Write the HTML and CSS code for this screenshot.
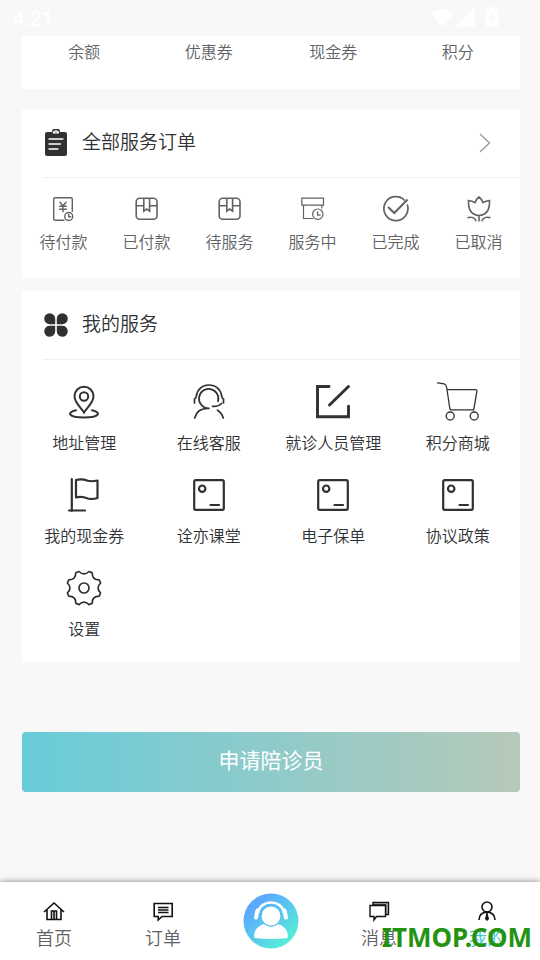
FILE: index.html
```html
<!DOCTYPE html>
<html lang="zh-CN">
<head>
<meta charset="utf-8">
<meta name="viewport" content="width=device-width, initial-scale=1">
<title>我的</title>
<link rel="stylesheet" href="styles.css">
</head>
<body>
<svg class="sprite" aria-hidden="true">
  <symbol id="i-package" viewBox="0 0 24 24"><g fill="none" stroke="currentColor" stroke-width="1.6"><rect x="1.2" y="1.2" width="20.8" height="21" rx="3.5"/><path d="M1.2 8.8h7.6M14.6 8.8H22M8.800 1.200v13l2.900-2.200 2.900 2.200v-13"/></g></symbol>
  <symbol id="i-card" viewBox="0 0 32 32"><g fill="none" stroke="currentColor" stroke-width="2.2" stroke-linecap="round"><rect x="1.200" y="1.200" width="29.600" height="29.600" rx="1.5"/><circle cx="9.200" cy="9.700" r="3.200"/><path d="M17.500 26h8.500"/></g></symbol>
</svg>
<div class="app">
  <header class="status">
    <span class="clock">4:21</span>
    <svg class="signals" width="68" height="22" viewBox="0 0 68 22" fill="currentColor" aria-hidden="true">
      <path d="M0 5Q11.500-3 23 5L11.500 19Z"/><path d="M25 19L44 0V19Z"/><path d="M59-1h5v2h3v18H55V1h4zM62 5l-4.500 6h3v5l4.500-6.500h-3z" fill-rule="evenodd"/>
    </svg>
  </header>
  <main>
    <section class="card wallet">
      <a href="#">余额</a><a href="#">优惠券</a><a href="#">现金券</a><a href="#">积分</a>
    </section>

    <section class="card orders">
      <a class="card-head" href="#">
        <svg width="26" height="28" viewBox="0 0 26 28" aria-hidden="true"><path fill="#303133" d="M4 3h5a4 4 0 0 1 8 0h5a2 2 0 0 1 2 2v20a2 2 0 0 1-2 2H4a2 2 0 0 1-2-2V5a2 2 0 0 1 2-2z"/><path d="M10.500 3.800a2.500 2 0 0 1 5 0zM6 10h14M6 15h11.500M6 20h9" fill="none" stroke="#fff" stroke-width="1.300" stroke-linecap="round"/></svg>
        <h2>全部服务订单</h2>
        <svg class="chevron" width="12" height="20" viewBox="0 0 12 20" fill="none" stroke="#909399" stroke-width="1.200" aria-hidden="true"><path d="M1 1l9.500 9L1 19"/></svg>
      </a>
      <nav class="order-list">
        <a href="#"><svg width="28" height="28" viewBox="0 0 28 28" fill="none" stroke="currentColor" stroke-width="1.400" aria-hidden="true"><path d="M14.500 25.200H5.200a1.500 1.500 0 0 1-1.500-1.500V4.300a1.500 1.500 0 0 1 1.500-1.500h15.600a1.500 1.500 0 0 1 1.500 1.500V17M9.600 6.800l3.400 4 3.400-4M13 10.800v6.400M9.200 11.300h7.600M9.200 14.200h7.600"/><circle cx="18.700" cy="21.500" r="4"/><path d="M18.700 19v2.700h2.500"/></svg>待付款</a>
        <a href="#"><svg width="28" height="28" viewBox="-2 -2 28 28" aria-hidden="true"><use href="#i-package" width="24" height="24"/></svg>已付款</a>
        <a href="#"><svg width="28" height="28" viewBox="-2 -2 28 28" aria-hidden="true"><use href="#i-package" width="24" height="24"/></svg>待服务</a>
        <a href="#"><svg width="28" height="28" viewBox="0 0 28 28" fill="none" stroke="currentColor" stroke-width="1.200" aria-hidden="true"><path d="M2.800 3.200h21.700v7H2.800zM4.500 10.200v13.300h9.800M22.800 10.200v3.300"/><circle cx="18.800" cy="19.200" r="5.200"/><path d="M18.600 16.500v3.600h3"/></svg>服务中</a>
        <a href="#"><svg width="28" height="28" viewBox="0 0 28 28" fill="none" stroke="currentColor" stroke-width="1.700" aria-hidden="true"><path d="M22.800 5.500A12 12 0 1 0 25.200 9.500"/><path d="M6 12l6.300 6L25.500 4.500" stroke-width="2"/></svg>已完成</a>
        <a href="#"><svg width="28" height="28" viewBox="0 0 28 28" fill="none" stroke="currentColor" stroke-width="1.600" aria-hidden="true"><path d="M3.500 5.500c2.500.2 4.500.9 6.500 2.200 1-2.700 2.300-4.500 4-5.700 1.700 1.200 3 3 4 5.700 2-1.300 4-2 6.500-2.200.4 9-2.500 14.500-10.500 15-8-.5-10.900-6-10.500-15zM14 20.500v6M2.500 22.700c4-1.200 7.500.2 8.700 3.500M25.500 22.700c-4-1.200-7.500.2-8.700 3.500"/></svg>已取消</a>
      </nav>
    </section>

    <section class="card services">
      <div class="card-head">
        <svg width="26" height="26" viewBox="0 0 26 26" fill="#303133" aria-hidden="true"><path d="M12.200 12.200H7A5.500 5.500 0 1 1 12.200 7zM13.800 12.200V7A5.500 5.500 0 1 1 19 12.200zM12.200 13.800V19A5.500 5.500 0 1 1 7 13.800zM13.800 13.800H19A5.500 5.500 0 1 1 13.800 19z"/></svg>
        <h2>我的服务</h2>
      </div>
      <nav class="service-list">
        <a href="#"><svg width="44" height="44" viewBox="0 0 44 44" fill="none" stroke="currentColor" stroke-width="2" stroke-linecap="round" aria-hidden="true"><path d="M22 32.500c-2.500-4-9.500-10-9.500-16.300a9.500 9.500 0 0 1 19 0C31.500 22.500 24.500 28.500 22 32.500z"/><circle cx="22" cy="16.500" r="4.200"/><path d="M14 30.200c-9.500 2-8 7.300 8 7.300s17.500-5.300 8-7.300"/></svg>地址管理</a>
        <a href="#"><svg width="44" height="44" viewBox="0 0 44 44" fill="none" stroke="currentColor" stroke-width="1.700" stroke-linecap="round" aria-hidden="true"><path d="M21.500 28.300A9.700 9.700 0 1 1 31 21.300M7.500 23v-4c1.200-.2 1.500-1.200 1.700-2.600C10.500 9 15.500 5 22 5s11.500 4 12.800 11.400c.2 1.400.5 2.400 1.700 2.600v4M34.500 23.500c-2 2.300-5 3-9 2.800M7.700 38c1.500-6.500 6.500-10 14.300-9.700M30.500 30.200c3 2 5 4.600 5.800 7.800"/></svg>在线客服</a>
        <a href="#"><svg width="44" height="44" viewBox="0 0 44 44" fill="none" stroke="currentColor" stroke-width="2.900" stroke-linecap="round" aria-hidden="true"><path d="M18 6.500H6.500v30.300h31V26.200M18.500 25L37.500 6.500"/></svg>就诊人员管理</a>
        <a href="#"><svg width="44" height="44" viewBox="0 0 44 44" fill="none" stroke="currentColor" stroke-width="1.300" stroke-linecap="round" aria-hidden="true"><path d="M1.500 2.800l6.700 1c1.800.6 2.200 1.800 2.500 3.700L13.800 28.500c.2 1 .5 1.400 1.500 1.400h22.400l3.200-18.500c.1-1.200-.3-1.800-1.400-1.800H11"/><circle cx="14.200" cy="36" r="4"/><circle cx="38.200" cy="36" r="4"/></svg>积分商城</a>
        <a href="#"><svg width="44" height="44" viewBox="0 0 44 44" fill="none" stroke="currentColor" stroke-width="2.200" stroke-linecap="round" stroke-linejoin="round" aria-hidden="true"><path d="M9.800 6v32M7 37.500h16M14 7c6-1.500 8.500-.5 12 .8 3.500 1 6 .5 9.500-.3V25c-3.500 1.200-6 1.500-9.500.5-4-1.500-6.500-2.500-12-1z"/></svg>我的现金券</a>
        <a href="#"><svg width="44" height="44" viewBox="-6 -6 44 44" aria-hidden="true"><use href="#i-card" width="32" height="32"/></svg>诠亦课堂</a>
        <a href="#"><svg width="44" height="44" viewBox="-6 -6 44 44" aria-hidden="true"><use href="#i-card" width="32" height="32"/></svg>电子保单</a>
        <a href="#"><svg width="44" height="44" viewBox="-6 -6 44 44" aria-hidden="true"><use href="#i-card" width="32" height="32"/></svg>协议政策</a>
        <a href="#"><svg width="44" height="44" viewBox="0 0 44 44" fill="none" stroke="currentColor" stroke-width="1.700" stroke-linejoin="round" aria-hidden="true"><circle cx="22" cy="22" r="5"/><path d="M17 5.500q5 5 10 0l3.200 1.400q0 7 7 7L38.600 17q-5 5 0 10l-1.400 3.200q-7 0-7 7L27 38.600q-5-5-10 0l-3.200-1.400q0-7-7-7L5.400 27q5-5 0-10l1.400-3.200q7 0 7-7z"/></svg>设置</a>
      </nav>
    </section>
    <button class="apply" type="button">申请陪诊员</button>
  </main>
  <nav class="tabbar">
    <a href="#"><svg width="24" height="22" viewBox="0 0 24 22" fill="none" stroke="currentColor" stroke-width="1.600" aria-hidden="true"><path d="M2 12L12 3l10 9M5 10v9.500h14V10M9.500 19.500V11h5v8.500M12 11v8.500"/></svg>首页</a>
    <a href="#"><svg width="24" height="22" viewBox="0 0 24 22" fill="none" stroke="currentColor" stroke-width="1.600" aria-hidden="true"><path d="M3.200 3.500h18v13H11L7.200 20v-3.500h-4zM7 7.500h10.500M7 10h10.500M7 12.500h10.500"/></svg>订单</a>
    <a class="center" href="#" aria-label="陪诊"><svg width="56" height="56" viewBox="0 0 56 56" aria-hidden="true"><defs><linearGradient id="g" x1=".15" y1=".1" x2=".85" y2=".9"><stop offset=".1" stop-color="#5ca8ff"/><stop offset=".95" stop-color="#56ecd8"/></linearGradient></defs><circle cx="28" cy="28" r="27.500" fill="url(#g)"/><path d="M11.500 45c-1.500-7 3-12 9.500-14q7 5 14 0c6.500 2 11 7 9.500 14q-16.500 2-33 0z" fill="#fff"/><circle cx="28" cy="23" r="10" fill="#fff" stroke="#5cc0f0" stroke-width="1.200"/><path d="M15 20C17 6 39 6 41 20" fill="none" stroke="#fff" stroke-width="2.500"/><path d="M14.500 17.500L13 24.500M41.500 17.500L43 24.500" stroke="#fff" stroke-width="4" stroke-linecap="round"/></svg></a>
    <a href="#"><svg width="24" height="22" viewBox="0 0 24 22" fill="none" stroke="currentColor" stroke-width="1.400" aria-hidden="true"><path d="M6 5V2.500h15.500v12h-3V5z" fill="#bbb"/><path d="M3 5.500h15.500v11H9.500L7 20v-3.500H3z" fill="#fff"/></svg>消息</a>
    <a class="active" href="#"><svg width="24" height="22" viewBox="0 0 24 22" fill="none" stroke="currentColor" stroke-width="1.600" aria-hidden="true"><circle cx="12" cy="7" r="5"/><path d="M4 20c0-5 2.500-7.500 8-8 5.500.5 8 3 8 8"/><path d="M12 13l1.500 6-1.500 1.500-1.500-1.500z" fill="currentColor" stroke-width="1"/></svg>我的</a>
    <span class="watermark">ITMOP.COM</span>
  </nav>
</div>
</body>
</html>
```
FILE: styles.css
```css
* { box-sizing: border-box; }
body {
  margin: 0;
  background: #f8f8f8;
  color: #303133;
  font: 16px/24px Roboto, "Noto Sans CJK SC", sans-serif;
  font-weight: 350;
}
a { color: inherit; text-decoration: none; }
svg { display: block; flex: none; }
.sprite { position: absolute; width: 0; height: 0; }
.app { display: flex; flex-direction: column; min-height: 100vh; }
.status {
  display: flex;
  justify-content: space-between;
  height: 36px;
  padding: 8px 41px 0 12px;
  color: #fff;
}
.clock { font-size: 21px; font-weight: 500; line-height: 22px; }
.signals { overflow: visible; }
main { flex: 1; padding: 0 20px 0 22px; }
.card { background: #fff; }
.wallet {
  display: grid;
  grid-template-columns: repeat(4, 1fr);
  padding: 5px 0 24px;
  margin-bottom: 20px;
  color: #606266;
  text-align: center;
}
.card-head {
  display: flex;
  align-items: center;
  gap: 13px;
  height: 69px;
  margin-left: 21px;
  border-bottom: 1px solid #f0f0f0;
}
.card-head h2 { margin: 0; font-size: 19px; font-weight: inherit; }
.chevron { margin-left: auto; margin-right: 29px; }
.orders { margin-bottom: 13px; padding-bottom: 23px; }
.order-list { display: grid; grid-template-columns: repeat(6, 1fr); color: #606266; }
.order-list a, .service-list a {
  display: flex;
  flex-direction: column;
  align-items: center;
}
.order-list a { gap: 8px; padding-top: 17px; }
.services { padding-bottom: 14px; }
.service-list { display: grid; grid-template-columns: repeat(4, 1fr); padding-top: 9px; }
.service-list a { gap: 8px; padding: 11px 0 6px; white-space: nowrap; }
.apply {
  display: block;
  width: 100%;
  height: 60px;
  margin-top: 70px;
  padding: 0 0 2px;
  border: 0;
  border-radius: 4px;
  background: linear-gradient(90deg, #68ccda, #b6c9b9);
  color: #fff;
  font: inherit;
  font-size: 21px;
  font-weight: 400;
}
.tabbar {
  position: relative;
  display: flex;
  height: 78px;
  background: #fff;
  box-shadow: 0 0 6px rgba(0, 0, 0, .5);
  color: #606266;
  font-size: 18px;
}
.tabbar a {
  flex: 1;
  display: flex;
  flex-direction: column;
  align-items: center;
  gap: 5px;
  padding-top: 18px;
}
.tabbar a + a { margin-left: 1px; margin-right: -1px; }
.tabbar svg { color: #111; }
.tabbar .center { padding-top: 11px; }
.tabbar .active { color: #3cc5d0; }
.watermark {
  position: absolute;
  right: 8px;
  bottom: 8px;
  color: #259312;
  font: bold 26px/30px "Noto Sans", sans-serif;
}
```
